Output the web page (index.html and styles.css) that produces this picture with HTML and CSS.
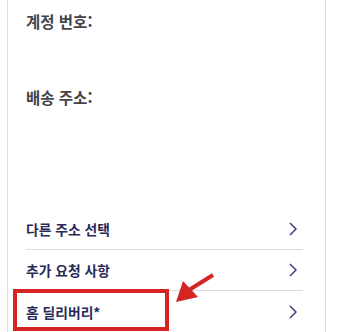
FILE: index.html
```html
<!DOCTYPE html>
<html lang="ko">
<head>
    <meta charset="UTF-8">
    <meta name="viewport" content="width=device-width, initial-scale=1.0">
    <title>배송 정보</title>
    <link rel="stylesheet" href="styles.css">
</head>
<body>
    <section class="card">
        <div class="info">
            <h3 class="info-label">계정 번호:</h3>
        </div>
        <div class="info address">
            <h3 class="info-label">배송 주소:</h3>
        </div>

        <ul class="options">
            <li class="option">
                <span>다른 주소 선택</span>
                <svg class="chevron" viewBox="0 0 8 14"><path d="M1 1l6 6-6 6"/></svg>
            </li>
            <li class="option">
                <span>추가 요청 사항</span>
                <svg class="chevron" viewBox="0 0 8 14"><path d="M1 1l6 6-6 6"/></svg>
            </li>
            <li class="option">
                <span>홈 딜리버리*</span>
                <svg class="chevron" viewBox="0 0 8 14"><path d="M1 1l6 6-6 6"/></svg>
            </li>
        </ul>
    </section>

    <!-- annotation overlay -->
    <div class="highlight"></div>
    <svg class="pointer" viewBox="0 0 338 332">
        <line x1="213" y1="275" x2="189" y2="290" />
        <polygon points="176,302 183,281 198,297" />
    </svg>
</body>
</html>
```

FILE: styles.css
```css
:root {
  --clr-border: #dcdcdc;
  --clr-label: #44444c;
  --clr-navy: #2a2a58;
  --clr-chevron: #3d3d80;
  --clr-red: #d42424;
}

*,
::after,
::before {
  margin: 0;
  padding: 0;
  box-sizing: border-box;
}

body {
  background: #fff;
  font-family: "Noto Sans CJK KR", "Noto Sans", sans-serif;
  width: 338px;
  height: 332px;
  overflow: hidden;
  position: relative;
}

.card {
  margin-left: 7px;
  width: 319px;
  height: 332px;
  border: 1px solid var(--clr-border);
  border-top: 0;
  border-bottom: 0;
  padding: 10px 22px 0 18px;
}

.info {
  height: 76px;
}

.address {
  height: 123px;
}

.info-label {
  font-size: 15.5px;
  font-weight: 700;
  line-height: 22px;
  color: var(--clr-label);
}

.options {
  list-style: none;
}

.option {
  height: 41px;
  display: flex;
  align-items: center;
  justify-content: space-between;
  font-size: 13.8px;
  font-weight: 700;
  color: var(--clr-navy);
  border-bottom: 1px solid var(--clr-border);
  padding-right: 6px;
}

.option:last-child {
  border-bottom: 0;
}

.chevron {
  width: 8px;
  height: 14px;
  fill: none;
  stroke: var(--clr-chevron);
  stroke-width: 1.5;
}

.highlight {
  position: absolute;
  left: 13px;
  top: 289px;
  width: 156px;
  height: 42px;
  border: 4px solid var(--clr-red);
}

.pointer {
  position: absolute;
  left: 0;
  top: 0;
  width: 338px;
  height: 332px;
}

.pointer line {
  stroke: var(--clr-red);
  stroke-width: 4;
}

.pointer polygon {
  fill: var(--clr-red);
}
```
